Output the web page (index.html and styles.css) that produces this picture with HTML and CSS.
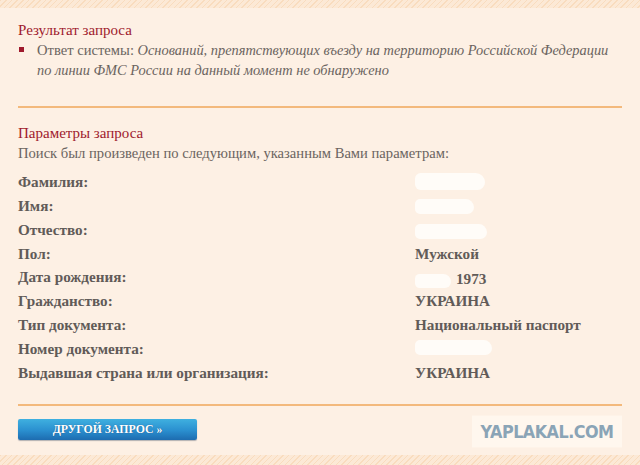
FILE: index.html
```html
<!DOCTYPE html>
<html lang="ru">
<head>
<meta charset="utf-8">
<link rel="stylesheet" href="styles.css">
</head>
<body>
<div class="stripe stripe-top"></div>
<main class="panel">
  <section class="block">
    <h2 class="title">Результат запроса</h2>
    <ul class="result">
      <li><span class="bullet"></span><p class="answer"><span class="label">Ответ системы:&nbsp;</span><em>Оснований, препятствующих въезду на территорию Российской Федерации по линии ФМС России на данный момент не обнаружено</em></p></li>
    </ul>
  </section>
  <hr class="rule rule-1">
  <section class="block">
    <h2 class="title">Параметры запроса</h2>
    <p class="intro">Поиск был произведен по следующим, указанным Вами параметрам:</p>
    <dl class="params">
      <dt>Фамилия:</dt><dd><span class="blot b1"></span></dd>
      <dt>Имя:</dt><dd><span class="blot b2"></span></dd>
      <dt>Отчество:</dt><dd><span class="blot b3"></span></dd>
      <dt>Пол:</dt><dd>Мужской</dd>
      <dt>Дата рождения:</dt><dd class="date"><span class="blot b4"></span><span>1973</span></dd>
      <dt>Гражданство:</dt><dd>УКРАИНА</dd>
      <dt>Тип документа:</dt><dd>Национальный паспорт</dd>
      <dt>Номер документа:</dt><dd><span class="blot b5"></span></dd>
      <dt>Выдавшая страна или организация:</dt><dd>УКРАИНА</dd>
    </dl>
  </section>
  <hr class="rule rule-2">
  <div class="footer">
    <button class="btn" type="button">ДРУГОЙ ЗАПРОС »</button>
    <div class="watermark">YAPLAKAL.COM</div>
  </div>
</main>
<div class="stripe stripe-bottom"></div>
</body>
</html>
```
FILE: styles.css
```css
html, body {
  margin: 0;
  padding: 0;
}
body {
  width: 640px;
  height: 465px;
  overflow: hidden;
  background: #fdf0e4;
  font-family: "Liberation Serif", "DejaVu Serif", serif;
  font-size: 14.6px;
  color: #6b6460;
  display: flex;
  flex-direction: column;
}
.stripe {
  background-color: #fce9d6;
  background-image: repeating-linear-gradient(135deg, #f9dcbe 0 1px, transparent 1px 4px);
}
.stripe-top { height: 8px; }
.stripe-bottom { height: 10px; margin-top: auto; }
.panel {
  padding: 12px 18px 0 18px;
}
.title {
  margin: 0;
  font-size: 15px;
  font-weight: normal;
  color: #9f1a2d;
  line-height: 20px;
}
.result {
  list-style: none;
  margin: 0;
  padding: 0;
  line-height: 20px;
}
.result li {
  display: flex;
  align-items: flex-start;
}
.bullet {
  flex: none;
  width: 5px;
  height: 5px;
  margin: 7px 13px 0 1px;
  background: #9f1a2d;
}
.answer { margin: 0; }
.answer em { font-style: italic; font-size: 14.4px; }
.rule {
  border: 0;
  height: 2px;
  background: #f3b97c;
  margin: 0;
}
.rule-1 { margin-top: 26px; }
.rule-1 + .block { padding-top: 15px; }
.intro {
  margin: 0;
  line-height: 20px;
}
.params {
  margin: 7px 0 0;
  display: grid;
  grid-template-columns: 397px 1fr;
  grid-auto-rows: 23.875px;
  align-items: center;
  font-weight: bold;
  font-size: 15.2px;
  color: #615b58;
}
.params dt, .params dd { margin: 0; line-height: 20px; }
.params dd { display: flex; align-items: center; }
.blot {
  display: inline-block;
  background: #fffcf8;
  border-radius: 6px 10px 8px 6px;
}
.b1 { width: 70px; height: 17px; }
.b2 { width: 59px; height: 15px; margin-top: 2px; }
.b3 { width: 72px; height: 15px; margin-top: 4px; }
.b4 { width: 36px; height: 14px; margin-right: 5px; margin-top: 4px; }
.b5 { width: 77px; height: 15px; margin-top: -4px; }
.date { padding-top: 4px; }
.rule-2 { margin-top: 19px; }
.footer {
  display: flex;
  justify-content: space-between;
  align-items: flex-start;
  margin-top: 13px;
}
.btn {
  width: 179px;
  height: 21px;
  border: 0;
  border-radius: 2px;
  background: linear-gradient(#3fb0e0, #2a8fcf 55%, #1d6cb0);
  box-shadow: 0 1px 1px rgba(40, 60, 90, 0.35);
  color: #ffffff;
  font-family: "Liberation Serif", serif;
  font-weight: bold;
  font-size: 11.8px;
  padding: 0;
  text-shadow: 0 0 1px rgba(0, 40, 90, 0.6);
}
.watermark {
  margin-top: -2px;
  width: 150px;
  height: 29px;
  background: #fff7ee;
  color: #8aa4b6;
  font-family: "DejaVu Sans", sans-serif;
  font-weight: bold;
  font-size: 16px;
  line-height: 29px;
  text-align: center;
  letter-spacing: -0.5px;
  transform: scaleY(1.1);
}
```
